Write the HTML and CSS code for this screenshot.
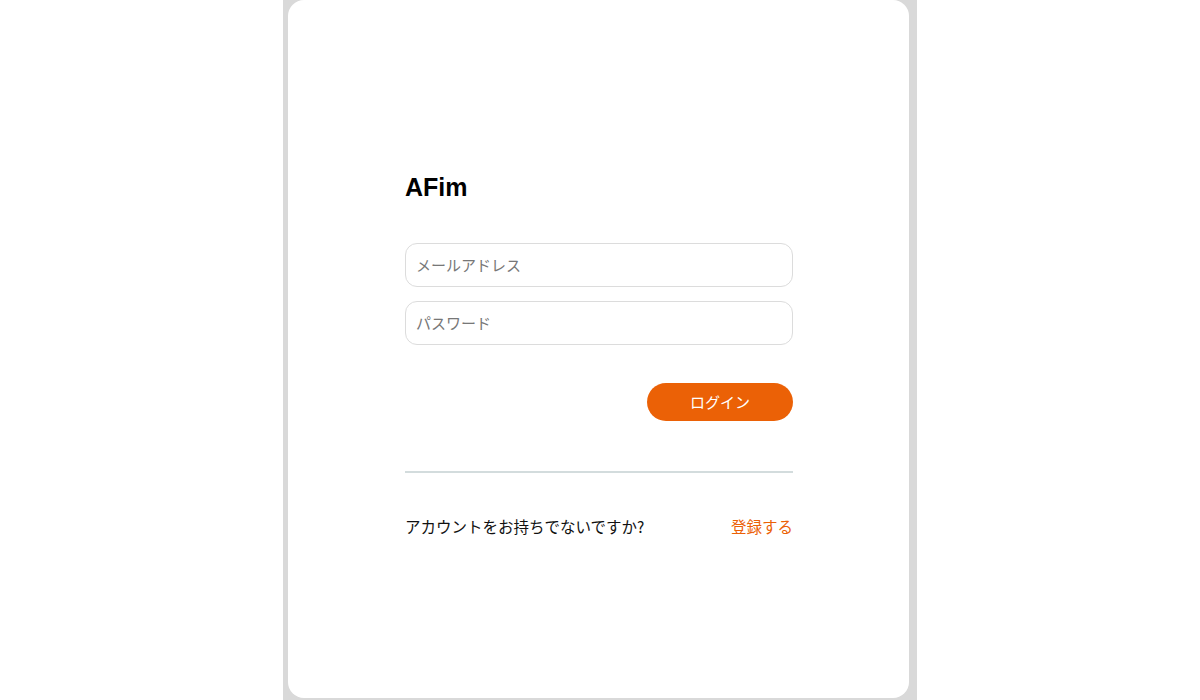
FILE: index.html
```html
<!DOCTYPE html>
<html lang="ja">
<head>
<meta charset="utf-8">
<title>AFim</title>
<link rel="stylesheet" href="styles.css">
</head>
<body>
<div class="frame">
  <main class="card">
    <form class="login">
      <h1 class="brand">AFim</h1>
      <div class="fields">
        <input class="field" type="email" placeholder="メールアドレス">
        <input class="field" type="password" placeholder="パスワード">
      </div>
      <div class="actions">
        <button class="btn" type="button">ログイン</button>
      </div>
      <hr class="divider">
      <div class="signup">
        <span class="signup-text">アカウントをお持ちでないですか?</span>
        <a class="signup-link" href="#">登録する</a>
      </div>
    </form>
  </main>
</div>
</body>
</html>
```
FILE: styles.css
```css
* { box-sizing: border-box; }
html, body { margin: 0; padding: 0; background: #fff; }
body {
  font-family: "Liberation Sans", "Noto Sans CJK JP", sans-serif;
  color: #111;
  height: 700px;
  overflow: hidden;
}
.frame {
  width: 634px;
  height: 700px;
  margin: 0 auto;
  background: #d9d9d9;
  padding: 0 8px 2px 5px;
}
.card {
  background: #fff;
  height: 698px;
  border-radius: 16px;
  display: flex;
  justify-content: center;
  padding-top: 170px;
}
.login {
  width: 388px;
  margin-left: 1px;
}
.brand {
  margin: 0;
  font-size: 25px;
  line-height: 34px;
  font-weight: 700;
  color: #000;
}
.fields {
  margin-top: 39px;
  display: flex;
  flex-direction: column;
  gap: 14px;
}
.field {
  height: 44px;
  width: 100%;
  border: 1px solid #dcdcdc;
  border-radius: 12px;
  padding: 0 10px 2px;
  font-family: "Noto Sans CJK JP", sans-serif;
  font-size: 15px;
  color: #111;
  outline: none;
  background: #fff;
}
.field::placeholder { color: #777; }
.actions {
  margin-top: 38px;
  display: flex;
  justify-content: flex-end;
}
.btn {
  width: 146px;
  height: 38px;
  border: none;
  border-radius: 19px;
  background: #eb6106;
  color: #fff;
  font-family: "Noto Sans CJK JP", sans-serif;
  font-size: 15px;
  font-weight: 400;
  padding: 0 0 2px;
  cursor: pointer;
}
.divider {
  margin: 50px 0 0;
  border: none;
  height: 2px;
  background: #d3dcdd;
}
.signup {
  margin-top: 42px;
  display: flex;
  justify-content: space-between;
  align-items: center;
  line-height: 22px;
  font-family: "Noto Sans CJK JP", sans-serif;
  font-size: 15.5px;
}
.signup-text { color: #111; }
.signup-link { color: #eb6106; text-decoration: none; }
```
